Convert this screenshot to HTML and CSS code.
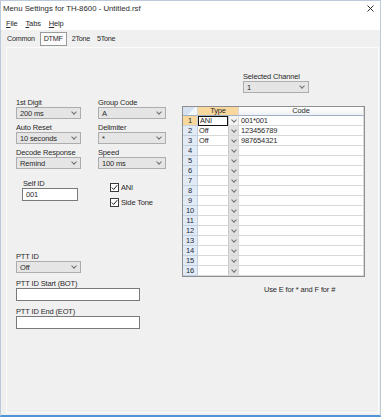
FILE: index.html
```html
<!DOCTYPE html>
<html lang="en">
<head>
    <meta charset="UTF-8">
    <title>Menu Settings for TH-8600 - Untitled.rsf</title>
    <link rel="stylesheet" href="styles.css">
</head>
<body>
<div class="window">
    <!-- title and menu -->
    <div class="titlebar">
        <span>Menu Settings for TH-8600 - Untitled.rsf</span>
        <svg class="close" width="7" height="7" viewBox="0 0 7 7"><path d="M0.5 0.5L6.5 6.5M6.5 0.5L0.5 6.5" stroke="#2b2b2b" stroke-width="1"/></svg>
    </div>
    <div class="menubar">
        <span><u>F</u>ile</span>
        <span><u>T</u>abs</span>
        <span><u>H</u>elp</span>
    </div>
    <div class="tabs">
        <span class="tab">Common</span>
        <span class="tab active">DTMF</span>
        <span class="tab">2Tone</span>
        <span class="tab">5Tone</span>
    </div>

    <div class="panel">
        <div class="left">
            <div class="grid">
                <div class="field"><label>1st Digit</label><div class="select">200 ms</div></div>
                <div class="field"><label>Group Code</label><div class="select">A</div></div>
                <div class="field"><label>Auto Reset</label><div class="select">10 seconds</div></div>
                <div class="field"><label>Delimiter</label><div class="select">*</div></div>
                <div class="field"><label>Decode Response</label><div class="select">Remind</div></div>
                <div class="field"><label>Speed</label><div class="select">100 ms</div></div>
            </div>

            <div class="idrow">
                <div class="field selfid"><label>Self ID</label><div class="input">001</div></div>
                <div class="checks">
                    <div class="check"><span class="box"><svg width="7" height="7" viewBox="0 0 7 7"><path d="M0.8 3.6L2.7 5.5L6.2 1.2" fill="none" stroke="#222" stroke-width="1"/></svg></span>ANI</div>
                    <div class="check"><span class="box"><svg width="7" height="7" viewBox="0 0 7 7"><path d="M0.8 3.6L2.7 5.5L6.2 1.2" fill="none" stroke="#222" stroke-width="1"/></svg></span>Side Tone</div>
                </div>
            </div>

            <div class="ptt">
                <div class="field short"><label>PTT ID</label><div class="select">Off</div></div>
                <div class="field wide"><label>PTT ID Start (BOT)</label><div class="input"></div></div>
                <div class="field wide"><label>PTT ID End (EOT)</label><div class="input"></div></div>
            </div>
        </div>

        <div class="right">
            <div class="field channel"><label>Selected Channel</label><div class="select">1</div></div>

            <div class="tbl">
                <div class="hd corner"></div><div class="hd htype">Type</div><div class="hd hcode">Code</div>
                <div class="rh sel">1</div><div class="type focus"><span class="val">ANI</span><span class="dd"></span></div><div class="code">001*001</div>
                <div class="rh">2</div><div class="type"><span class="val">Off</span><span class="dd"></span></div><div class="code">123456789</div>
                <div class="rh">3</div><div class="type"><span class="val">Off</span><span class="dd"></span></div><div class="code">987654321</div>
                <div class="rh">4</div><div class="type"><span class="val"></span><span class="dd"></span></div><div class="code"></div>
                <div class="rh">5</div><div class="type"><span class="val"></span><span class="dd"></span></div><div class="code"></div>
                <div class="rh">6</div><div class="type"><span class="val"></span><span class="dd"></span></div><div class="code"></div>
                <div class="rh">7</div><div class="type"><span class="val"></span><span class="dd"></span></div><div class="code"></div>
                <div class="rh">8</div><div class="type"><span class="val"></span><span class="dd"></span></div><div class="code"></div>
                <div class="rh">9</div><div class="type"><span class="val"></span><span class="dd"></span></div><div class="code"></div>
                <div class="rh">10</div><div class="type"><span class="val"></span><span class="dd"></span></div><div class="code"></div>
                <div class="rh">11</div><div class="type"><span class="val"></span><span class="dd"></span></div><div class="code"></div>
                <div class="rh">12</div><div class="type"><span class="val"></span><span class="dd"></span></div><div class="code"></div>
                <div class="rh">13</div><div class="type"><span class="val"></span><span class="dd"></span></div><div class="code"></div>
                <div class="rh">14</div><div class="type"><span class="val"></span><span class="dd"></span></div><div class="code"></div>
                <div class="rh">15</div><div class="type"><span class="val"></span><span class="dd"></span></div><div class="code"></div>
                <div class="rh">16</div><div class="type"><span class="val"></span><span class="dd"></span></div><div class="code"></div>
            </div>

            <p class="note">Use E for * and F for #</p>
        </div>
    </div>
</div>
</body>
</html>
```

FILE: styles.css
```css
* { box-sizing: border-box; }
body { margin: 0; background: #fff; font-family: "Liberation Sans", Arial, sans-serif; font-size: 7.5px; letter-spacing: -0.15px; color: #2a2a2a; }

.window {
    width: 381px;
    height: 417px;
    display: flex;
    flex-direction: column;
    background: #f0f0f0;
    border: 1px solid #bccada;
    border-bottom: 2px solid #4f95d9;
}
.titlebar { height: 15px; flex: none; display: flex; align-items: center; justify-content: space-between; padding: 0 6px 0 2px; background: #fff; font-size: 7.8px; letter-spacing: 0; }
.menubar { height: 14px; flex: none; display: flex; align-items: center; gap: 8px; padding-left: 5px; background: #fff; }
.tabs { height: 17px; flex: none; display: flex; align-items: center; gap: 3px; padding-left: 4px; font-size: 7.2px; letter-spacing: -0.25px; }
.tab { padding: 1px 1px; border: 1px solid transparent; line-height: 10px; }
.tab.active { padding: 1px 3px; border-color: #9a9a9a; background: #fafafa; }

.panel { flex: 1; display: flex; margin: 0 1px 2px 5px; border: 1px solid #fbfbfb; }
.left { width: 159px; padding: 50px 0 0 9px; }
.right { width: 183px; margin-left: 16px; padding-top: 24px; }

/* fields */
.field label { display: block; line-height: 9px; white-space: nowrap; }
.select {
    height: 12px;
    display: flex;
    align-items: center;
    justify-content: space-between;
    padding-left: 3px;
    border: 1px solid #adadad;
    background: #e5e5e5;
}
.select::after, .dd::after {
    content: '';
    width: 3px;
    height: 3px;
    margin: -2px 4px 0 0;
    border-right: 1px solid #707070;
    border-bottom: 1px solid #707070;
    transform: rotate(45deg);
}
.input { height: 13px; padding-left: 3px; line-height: 11px; border: 1px solid #7a7a7a; background: #fff; }

.grid { display: grid; grid-template-columns: 65px 68px; column-gap: 17px; row-gap: 4px; }

.idrow { display: flex; margin-top: 11px; }
.selfid { width: 56px; margin-left: 6px; }
.selfid label { padding-left: 1px; line-height: 8px; }
.checks { display: flex; flex-direction: column; gap: 6px; margin-left: 32px; padding-top: 3px; }
.check { display: flex; align-items: center; gap: 2px; height: 9px; }
.box { width: 9px; height: 9px; display: flex; align-items: center; justify-content: center; border: 1px solid #3a3a3a; background: #fff; }

.ptt { margin-top: 46px; }
.ptt label { line-height: 8px; }
.ptt .field + .field { margin-top: 7px; }
.short { width: 65px; }
.wide { width: 124px; }

.channel { width: 66px; margin-left: 61px; }

/* channel table */
.tbl {
    display: grid;
    grid-template-columns: 15px 41px 1fr;
    grid-template-rows: 9px;
    grid-auto-rows: 10px;
    margin-top: 13px;
    border: 1px solid #8f8f8f;
    background: #fff;
}
.tbl > div { border-right: 1px solid #d8d8d8; border-bottom: 1px solid #d8d8d8; line-height: 9px; white-space: nowrap; }
.hd { text-align: center; line-height: 8px !important; border-bottom-color: #9fb0c4 !important; }
.corner { background: linear-gradient(135deg, #d6e2f2 55%, #f4f8fc 56%); }
.htype { background: #f8d89d; }
.hcode { background: linear-gradient(#ffffff, #eef1f5); }
.rh { text-align: center; background: #e2eaf5; border-color: #c3d0e0 !important; color: #1d2b3b; }
.rh.sel { background: #f8d89d; }
.type { display: flex; }
.val { flex: 1; padding-left: 1px; }
.focus .val { border: 1px solid #111; line-height: 8px; margin-bottom: -1px; }
.dd { width: 10px; display: flex; align-items: center; justify-content: center; background: #e1e1e1; border-left: 1px solid #c9c9c9; }
.dd::after { margin: -2px 0 0 0; }
.focus .dd { background: #f3f3f3; }
.code { padding-left: 2px; }

.note { margin: 8px 0 0 82px; line-height: 9px; }
```
